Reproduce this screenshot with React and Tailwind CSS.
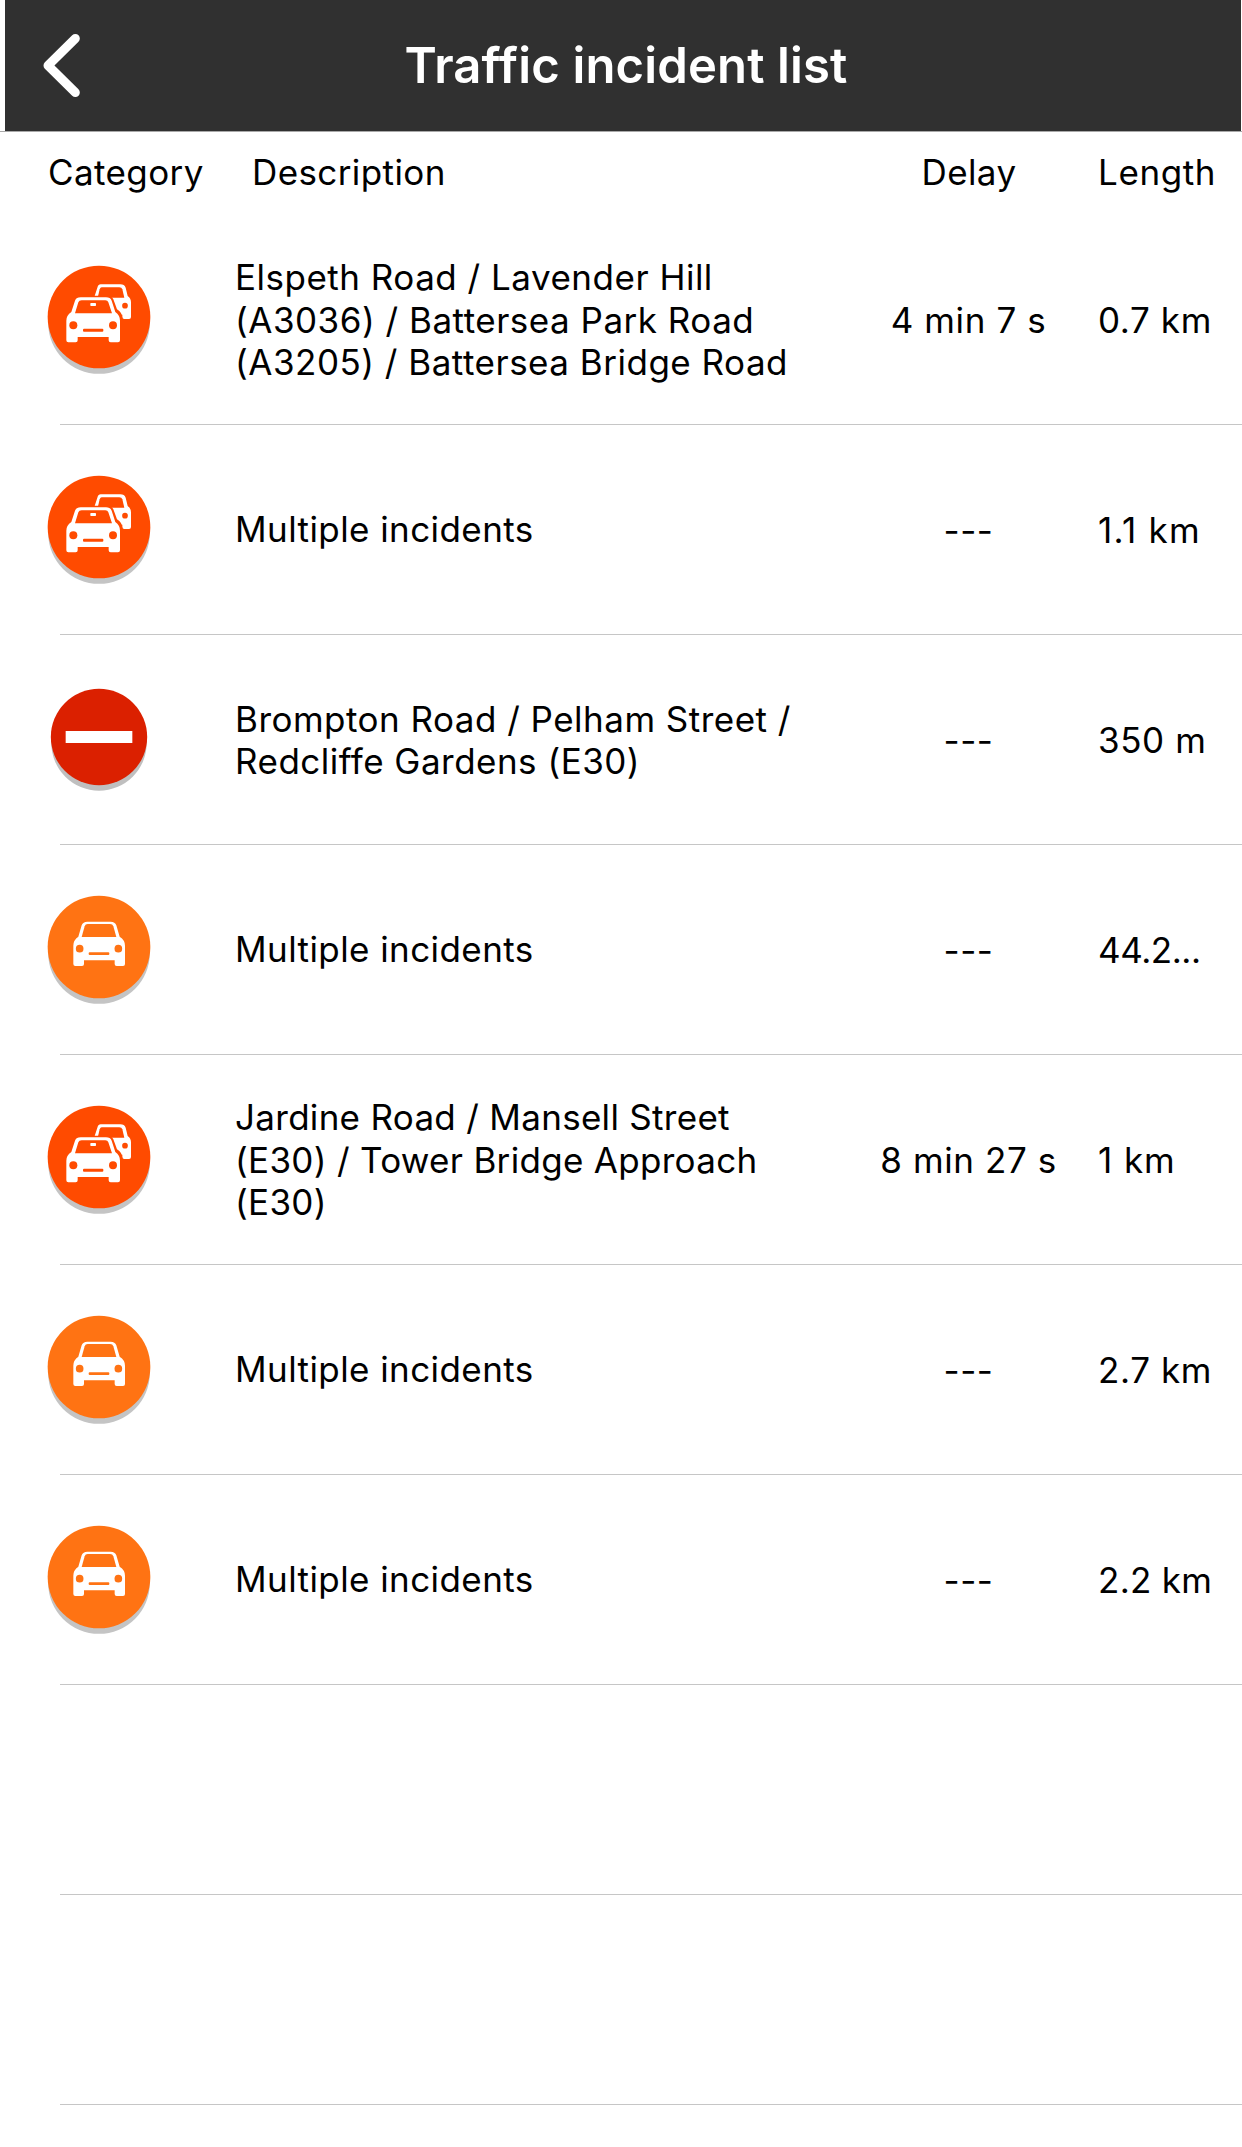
const incidents = [
  { icon: 'jam', text: 'Elspeth Road / Lavender Hill (A3036) / Battersea Park Road (A3205) / Battersea Bridge Road', tracking: 'tracking-[0.5px]', delay: '4 min 7 s', length: '0.7 km' },
  { icon: 'jam', text: 'Multiple incidents', tracking: 'tracking-[0.42px] -mt-0.5', delay: '---', length: '1.1 km', lengthTracking: 'tracking-[1.3px]' },
  { icon: 'closed', text: 'Brompton Road / Pelham Street / Redcliffe Gardens (E30)', tracking: 'tracking-[0.48px]', delay: '---', length: '350 m' },
  { icon: 'car', text: 'Multiple incidents', tracking: 'tracking-[0.42px] -mt-0.5', delay: '---', length: '44.2...', lengthTracking: 'tracking-[-0.45px]' },
  { icon: 'jam', text: 'Jardine Road / Mansell Street (E30) / Tower Bridge Approach (E30)', tracking: 'tracking-[0.3px]', delay: '8 min 27 s', length: '1 km', lengthTracking: 'tracking-[0.9px]' },
  { icon: 'car', text: 'Multiple incidents', tracking: 'tracking-[0.42px] -mt-0.5', delay: '---', length: '2.7 km' },
  { icon: 'car', text: 'Multiple incidents', tracking: 'tracking-[0.42px] -mt-0.5', delay: '---', length: '2.2 km', lengthTracking: 'tracking-[0.3px]' },
  null,
  null,
];

// Front view of a car; `bg` is the badge colour that shows through the cut-outs.
function Car({ bg }) {
  return (
    <>
      <path fill="#fff" d="M172 125H242Q255 125 259 136L269 170Q285 180 285 197V252Q285 258 279 258H260Q254 258 254 252V241H162V252Q162 258 156 258H136Q130 258 130 252V197Q130 180 145 170L155 136Q159 125 172 125Z" />
      <path fill={bg} d="M173 132H240Q248 132 250 139L259 171H155L164 139Q166 132 173 132Z" />
      <circle cx="149" cy="206" r="11.5" fill={bg} />
      <circle cx="265" cy="206" r="11.5" fill={bg} />
      <rect x="176" y="217" width="62" height="8" rx="3" fill={bg} />
    </>
  );
}

function Jam({ bg }) {
  return (
    <>
      <path fill="#fff" d="M212 103H271Q283 103 287 113L293 138Q303 145 303 157V201Q303 207 297 207H283Q277 207 277 201V194H240L194 138L202 113Q205 103 212 103Z" />
      <path fill={bg} d="M215 112H268Q275 112 277 118L283 143H203L209 118Q211 112 215 112Z" />
      <circle cx="285" cy="167" r="8.5" fill={bg} />
      <path fill={bg} d="M150 137H232Q245 137 250 148L261 178Q277 188 277 204V270H100V200L130 150Z" />
      <path fill="#fff" d="M152 142H228Q241 142 245 152L256 186Q270 196 270 212V271Q270 277 264 277H242Q236 277 236 271V261H143V271Q143 277 137 277H115Q109 277 109 271V212Q109 196 124 186L135 152Q139 142 152 142Z" />
      <path fill={bg} d="M155 151H226Q233 151 235 157L246 190H135L145 157Q147 151 155 151Z" />
      <rect x="181" y="159" width="17" height="9" rx="2" fill="#fff" />
      <circle cx="130" cy="226" r="12" fill={bg} />
      <circle cx="249" cy="226" r="12" fill={bg} />
      <rect x="159" y="236" width="61" height="9" rx="3" fill={bg} />
    </>
  );
}

function Badge({ kind }) {
  if (kind === 'closed') {
    return (
      <svg viewBox="0 0 420 420" className="size-[140px] shrink-0">
        <circle cx="207" cy="219" r="143" fill="#bfbfbf" />
        <circle cx="207" cy="201" r="144.5" fill="#db2000" />
        <rect x="107" y="183" width="200" height="36" fill="#fff" />
      </svg>
    );
  }
  const bg = kind === 'jam' ? '#ff4b00' : '#ff7313';
  return (
    <svg viewBox="0 0 420 420" className="size-[140px] shrink-0">
      <circle cx="207" cy="219" r="152.5" fill="#c4c4c4" />
      <circle cx="207" cy="201" r="154" fill={bg} />
      {kind === 'jam' ? <Jam bg={bg} /> : <Car bg={bg} />}
    </svg>
  );
}

export default function App() {
  return (
    <div className="h-[2147px] w-[1242px] overflow-hidden bg-white font-['Inter',sans-serif] text-[35px] leading-[42.5px] tracking-[0.6px] text-black">
      <header className="flex h-[132px] border-b border-[#a9a9a9] pr-px pl-[5px]">
        <div className="grid flex-1 grid-cols-[200px_1fr_194px] items-center bg-[#303030]">
          <svg viewBox="0 0 120 200" className="ml-[35px] h-[67px] w-10" fill="none" stroke="#fff" strokeWidth="27" strokeLinecap="round" strokeLinejoin="round">
            <path d="M106 19L24 100L106 181" />
          </svg>
          <h1 className="text-center text-[49px] leading-[60px] font-semibold tracking-[0.15px] whitespace-nowrap text-white">Traffic incident list</h1>
        </div>
      </header>
      <div className="flex h-[83px] pt-[19px] tracking-[0.4px]">
        <div className="w-[252px] pl-12">Category</div>
        <div className="w-[586px]">Description</div>
        <div className="w-[262px] text-center">Delay</div>
        <div className="-ml-0.5 tracking-[0.6px]">Length</div>
      </div>
      <ul>
        {incidents.map((item, i) => (
          <li key={i}>
            <div className="flex h-[209px] items-center pt-px pl-[30px]">
              {item && (
                <>
                  <Badge kind={item.icon} />
                  <p className={`ml-[65px] w-[570px] ${item.tracking}`}>{item.text}</p>
                  <p className="ml-[34px] w-[259px] text-center">{item.delay}</p>
                  <p className={`whitespace-nowrap ${item.lengthTracking ?? ''}`}>{item.length}</p>
                </>
              )}
            </div>
            <div className="ml-[60px] h-px bg-[#c6c6c6]" />
          </li>
        ))}
      </ul>
    </div>
  );
}
